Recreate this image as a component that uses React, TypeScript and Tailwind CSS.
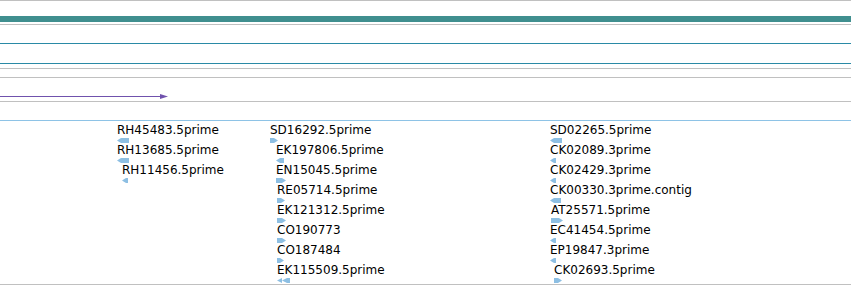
type Dir = "L" | "R" | "LL";

type Feature = {
  name: string;
  x: number;
  row: number;
  dir: Dir;
  w: number;
};

const features: Feature[] = [
  { name: "RH45483.5prime", x: 117, row: 0, dir: "L", w: 12 },
  { name: "RH13685.5prime", x: 117, row: 1, dir: "L", w: 12 },
  { name: "RH11456.5prime", x: 122, row: 2, dir: "L", w: 6 },

  { name: "SD16292.5prime", x: 270, row: 0, dir: "R", w: 8 },
  { name: "EK197806.5prime", x: 276, row: 1, dir: "L", w: 8 },
  { name: "EN15045.5prime", x: 276, row: 2, dir: "R", w: 10 },
  { name: "RE05714.5prime", x: 277, row: 3, dir: "R", w: 8 },
  { name: "EK121312.5prime", x: 277, row: 4, dir: "R", w: 9 },
  { name: "CO190773", x: 277, row: 5, dir: "R", w: 9 },
  { name: "CO187484", x: 277, row: 6, dir: "R", w: 7 },
  { name: "EK115509.5prime", x: 277, row: 7, dir: "LL", w: 13 },

  { name: "SD02265.5prime", x: 550, row: 0, dir: "L", w: 12 },
  { name: "CK02089.3prime", x: 550, row: 1, dir: "L", w: 6 },
  { name: "CK02429.3prime", x: 550, row: 2, dir: "L", w: 6 },
  { name: "CK00330.3prime.contig", x: 550, row: 3, dir: "L", w: 11 },
  { name: "AT25571.5prime", x: 551, row: 4, dir: "R", w: 12 },
  { name: "EC41454.5prime", x: 550, row: 5, dir: "L", w: 6 },
  { name: "EP19847.3prime", x: 550, row: 6, dir: "L", w: 6 },
  { name: "CK02693.5prime", x: 554, row: 7, dir: "R", w: 8 },
];

// glyph under each label, pointing to the strand
function Strand({ dir, w }: { dir: Dir; w: number }) {
  let pts = "";
  if (dir === "R") pts = `0,0 ${w - 4},0 ${w},2.5 ${w - 4},5 0,5`;
  if (dir === "L") pts = `0,2.5 4,0 ${w},0 ${w},5 4,5`;
  return (
    <svg width={w} height={5} className="block mt-px">
      {dir === "LL" ? (
        <>
          <polygon points={`0,2.5 5,0 5,5`} fill="#8dbfe3" />
          <polygon points={`5,2.5 10,0 ${w},0 ${w},5 10,5`} fill="#8dbfe3" />
        </>
      ) : (
        <polygon points={pts} fill="#8dbfe3" />
      )}
    </svg>
  );
}

export default function App() {
  return (
    <div className="w-[851px] h-[285px] bg-white overflow-hidden font-['DejaVu_Sans',sans-serif]">
      <div className="h-px bg-[#c0c0c0]"></div>
      <div className="h-[15px]"></div>
      <div className="h-[6px] bg-[#408f8f]"></div>
      <div className="h-[2px]"></div>
      <div className="h-px bg-[#c0c0c0]"></div>
      <div className="h-[18px]"></div>
      <div className="h-px bg-[#2a8aa6]"></div>
      <div className="h-[19px]"></div>
      <div className="h-px bg-[#2a8aa6]"></div>
      <div className="h-[4px]"></div>
      <div className="h-px bg-[#c0c0c0]"></div>
      <div className="h-[8px]"></div>
      <div className="h-px bg-[#c0c0c0]"></div>

      {/* track with the purple feature */}
      <div className="h-[23px]">
        <svg width={851} height={23} className="block">
          <line x1={0} y1={18.5} x2={162} y2={18.5} stroke="#7052ad" strokeWidth={1} />
          <polygon points="160,16 168,18.5 160,21" fill="#7052ad" />
        </svg>
      </div>

      <div className="h-px bg-[#c0c0c0]"></div>
      <div className="h-[18px]"></div>
      <div className="h-px bg-[#8ec3e6]"></div>

      {/* EST track */}
      <div className="relative h-[163px]">
        {features.map((f) => (
          <div
            key={f.name}
            className="absolute"
            style={{ left: f.x, top: 2 + f.row * 20 }}
          >
            <div className="text-[12px] leading-[14px] text-black whitespace-nowrap">{f.name}</div>
            <Strand dir={f.dir} w={f.w} />
          </div>
        ))}
      </div>

      <div className="h-px bg-[#c0c0c0]"></div>
    </div>
  );
}
